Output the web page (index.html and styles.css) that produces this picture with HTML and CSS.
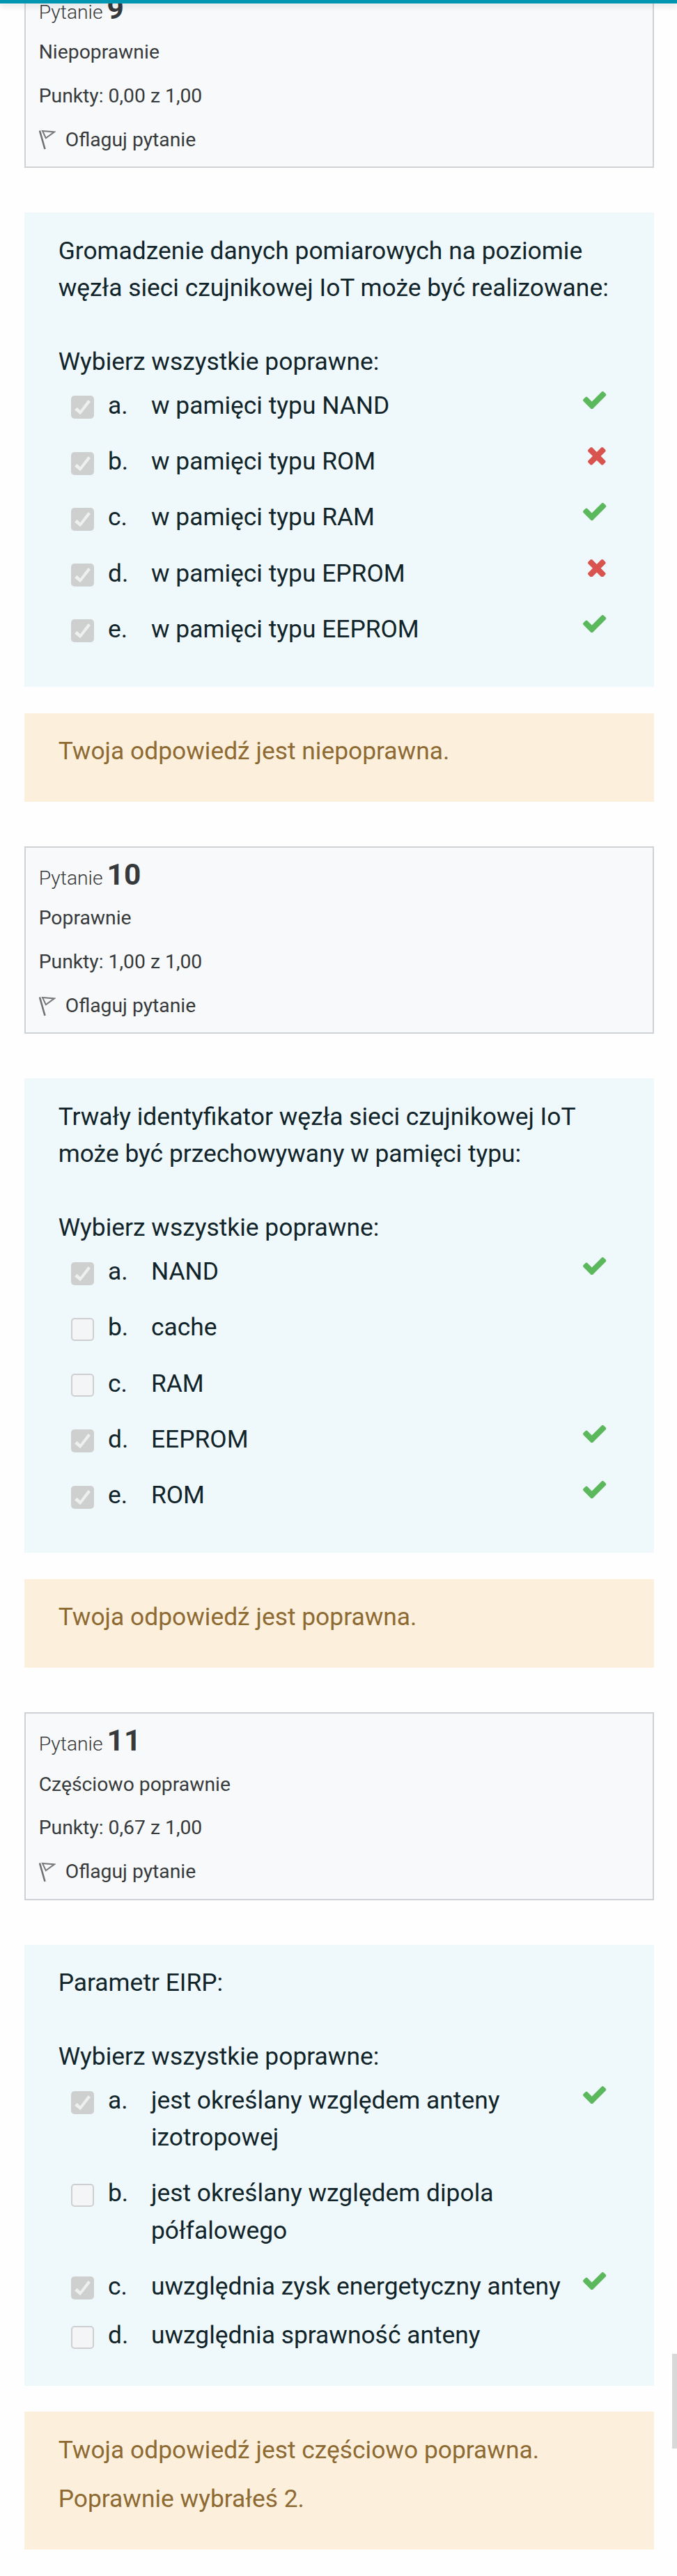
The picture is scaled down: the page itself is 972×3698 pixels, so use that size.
FILE: index.html
```
<!DOCTYPE html>
<html lang="pl">
<head>
<meta charset="utf-8">
<title>Przegląd testu</title>
<link rel="stylesheet" href="styles.css">
</head>
<body>
<div class="navbar"></div>
<main class="page" id="page"></main>
<div class="scrollbar"></div>
<script src="app.js"></script>
</body>
</html>
```

FILE: styles.css
```
* { box-sizing: border-box; }
body {
  margin: 0;
  height: 3698px;
  position: relative;
  overflow: hidden;
  background: #fefefe;
  color: #10242a;
  font: 400 35.39px/53.08px Roboto, sans-serif;
}
p { margin: 0; }
svg { display: block; }
.navbar {
  position: absolute;
  z-index: 2;
  top: 0;
  left: 0;
  right: 0;
  height: 5px;
  background: #0095b0;
  box-shadow: 0 4px 9px rgba(0, 0, 0, .13);
}
.scrollbar {
  position: absolute;
  top: 3379px;
  right: 0;
  width: 7px;
  height: 136px;
  background: #d8d8d8;
}
.page {
  margin-top: -28px;
  padding: 0 33.4px 0 34.7px;
}
.info {
  height: 269.3px;
  border: 2px solid #ced2d7;
  background: #f8f9fb;
  padding: 17.6px 19px 0;
  color: #373a3c;
  font-size: 28.31px;
  line-height: 42.47px;
  display: flex;
  flex-direction: column;
  gap: 20.3px;
}
.info .no {
  height: 42.3px;
  font-weight: 300;
  display: flex;
  align-items: baseline;
  gap: 6px;
}
.info .no b { font-size: 42.47px; font-weight: 700; }
.flag { display: flex; align-items: center; }
.flag svg { width: 24px; height: 29px; margin-right: 14px; }
.content {
  margin-top: 64px;
  padding: 28.3px 48px 56.2px 49px;
  background: #eff8fb;
}
.content.short { padding-bottom: 45.4px; }
.prompt { margin: 53.08px 0 9.9px; }
.answers { display: flex; flex-direction: column; gap: 27.2px; }
.answer { display: flex; align-items: flex-start; }
.answer.tight { margin-top: -9.8px; }
.box {
  flex: none;
  width: 33px;
  height: 33px;
  margin: 12.6px 20px 0 18.3px;
  border: 2.4px solid #cdcfd0;
  border-radius: 5px;
  background: #f3f5f6;
}
.box.on { border: 0; background: #cecfcf; }
.letter { flex: none; width: 62px; }
.text { flex: 1; white-space: nowrap; }
.mark { margin-top: 5px; }
.mark.ok { width: 33.3px; height: 26.3px; margin-right: 20px; }
.mark.bad { width: 25.6px; height: 25.6px; margin-right: 21px; margin-top: 6px; }
.feedback {
  margin: 37.7px 0 64px;
  padding: 28.3px 49px 46px;
  background: #fcefdc;
  color: #8e6a33;
  display: flex;
  flex-direction: column;
  gap: 17.6px;
}
```

FILE: app.js
```
const FLAG = '<svg viewBox="0 0 24 29" fill="none" stroke="#77797a" stroke-width="2"><path d="M1 1.5L8.5 28" stroke-width="2.6" stroke="#6f7172"/><path d="M5 2L22 3.4L9.8 12.2Z"/></svg>';
const TICK = '<svg viewBox="0 0 33 33"><path d="M5 20.5L8.7 16.8L13.2 21.2L24.6 6L28 8.8L13.4 27.2Z" fill="#eeefef"/></svg>';
const OK = '<svg class="mark ok" viewBox="121 294 1550 1228" fill="#5cb85c"><path d="M1671 566q0 40-28 68l-724 724-136 136q-28 28-68 28t-68-28l-136-136-362-362q-28-28-28-68t28-68l136-136q28-28 68-28t68 28l294 295 656-657q28-28 68-28t68 28l136 136q28 28 28 68z"/></svg>';
const BAD = '<svg class="mark bad" viewBox="302 366 1188 1188" fill="#d9534f"><path d="M1490 1322q0 40-28 68l-136 136q-28 28-68 28t-68-28l-294-294-294 294q-28 28-68 28t-68-28l-136-136q-28-28-28-68t28-68l294-294-294-294q-28-28-28-68t28-68l136-136q28-28 68-28t68 28l294 294 294-294q28-28 68-28t68 28l136 136q28 28 28 68t-28 68l-294 294 294 294q28 28 28 68z"/></svg>';

// answer: [text, checked, mark, tight]
const questions = [
  { no: 9, state: 'Niepoprawnie', pts: '0,00',
    q: 'Gromadzenie danych pomiarowych na poziomie<br>węzła sieci czujnikowej IoT może być realizowane:',
    a: [['w pamięci typu NAND', 1, OK], ['w pamięci typu ROM', 1, BAD], ['w pamięci typu RAM', 1, OK], ['w pamięci typu EPROM', 1, BAD], ['w pamięci typu EEPROM', 1, OK]],
    f: ['Twoja odpowiedź jest niepoprawna.'] },
  { no: 10, state: 'Poprawnie', pts: '1,00',
    q: 'Trwały identyfikator węzła sieci czujnikowej IoT<br>może być przechowywany w pamięci typu:',
    a: [['NAND', 1, OK], ['cache', 0, ''], ['RAM', 0, ''], ['EEPROM', 1, OK], ['ROM', 1, OK]],
    f: ['Twoja odpowiedź jest poprawna.'] },
  { no: 11, state: 'Częściowo poprawnie', pts: '0,67', short: true,
    q: 'Parametr EIRP:',
    a: [['jest określany względem anteny<br>izotropowej', 1, OK], ['jest określany względem dipola<br>półfalowego', 0, ''], ['uwzględnia zysk energetyczny anteny', 1, OK], ['uwzględnia sprawność anteny', 0, '', 1]],
    f: ['Twoja odpowiedź jest częściowo poprawna.', 'Poprawnie wybrałeś 2.'] }
];

document.getElementById('page').innerHTML = questions.map(x => `
<section class="info">
  <div class="no"><span>Pytanie</span><b>${x.no}</b></div>
  <div>${x.state}</div>
  <div>Punkty: ${x.pts} z 1,00</div>
  <div class="flag">${FLAG}<span>Oflaguj pytanie</span></div>
</section>
<section class="content${x.short ? ' short' : ''}">
  <p>${x.q}</p>
  <p class="prompt">Wybierz wszystkie poprawne:</p>
  <div class="answers">${x.a.map((r, i) => `
    <div class="answer${r[3] ? ' tight' : ''}">
      <span class="box${r[1] ? ' on' : ''}">${r[1] ? TICK : ''}</span>
      <span class="letter">${'abcde'[i]}.</span>
      <span class="text">${r[0]}</span>${r[2]}
    </div>`).join('')}
  </div>
</section>
<section class="feedback">${x.f.map(t => `<p>${t}</p>`).join('')}</section>`).join('');
```
